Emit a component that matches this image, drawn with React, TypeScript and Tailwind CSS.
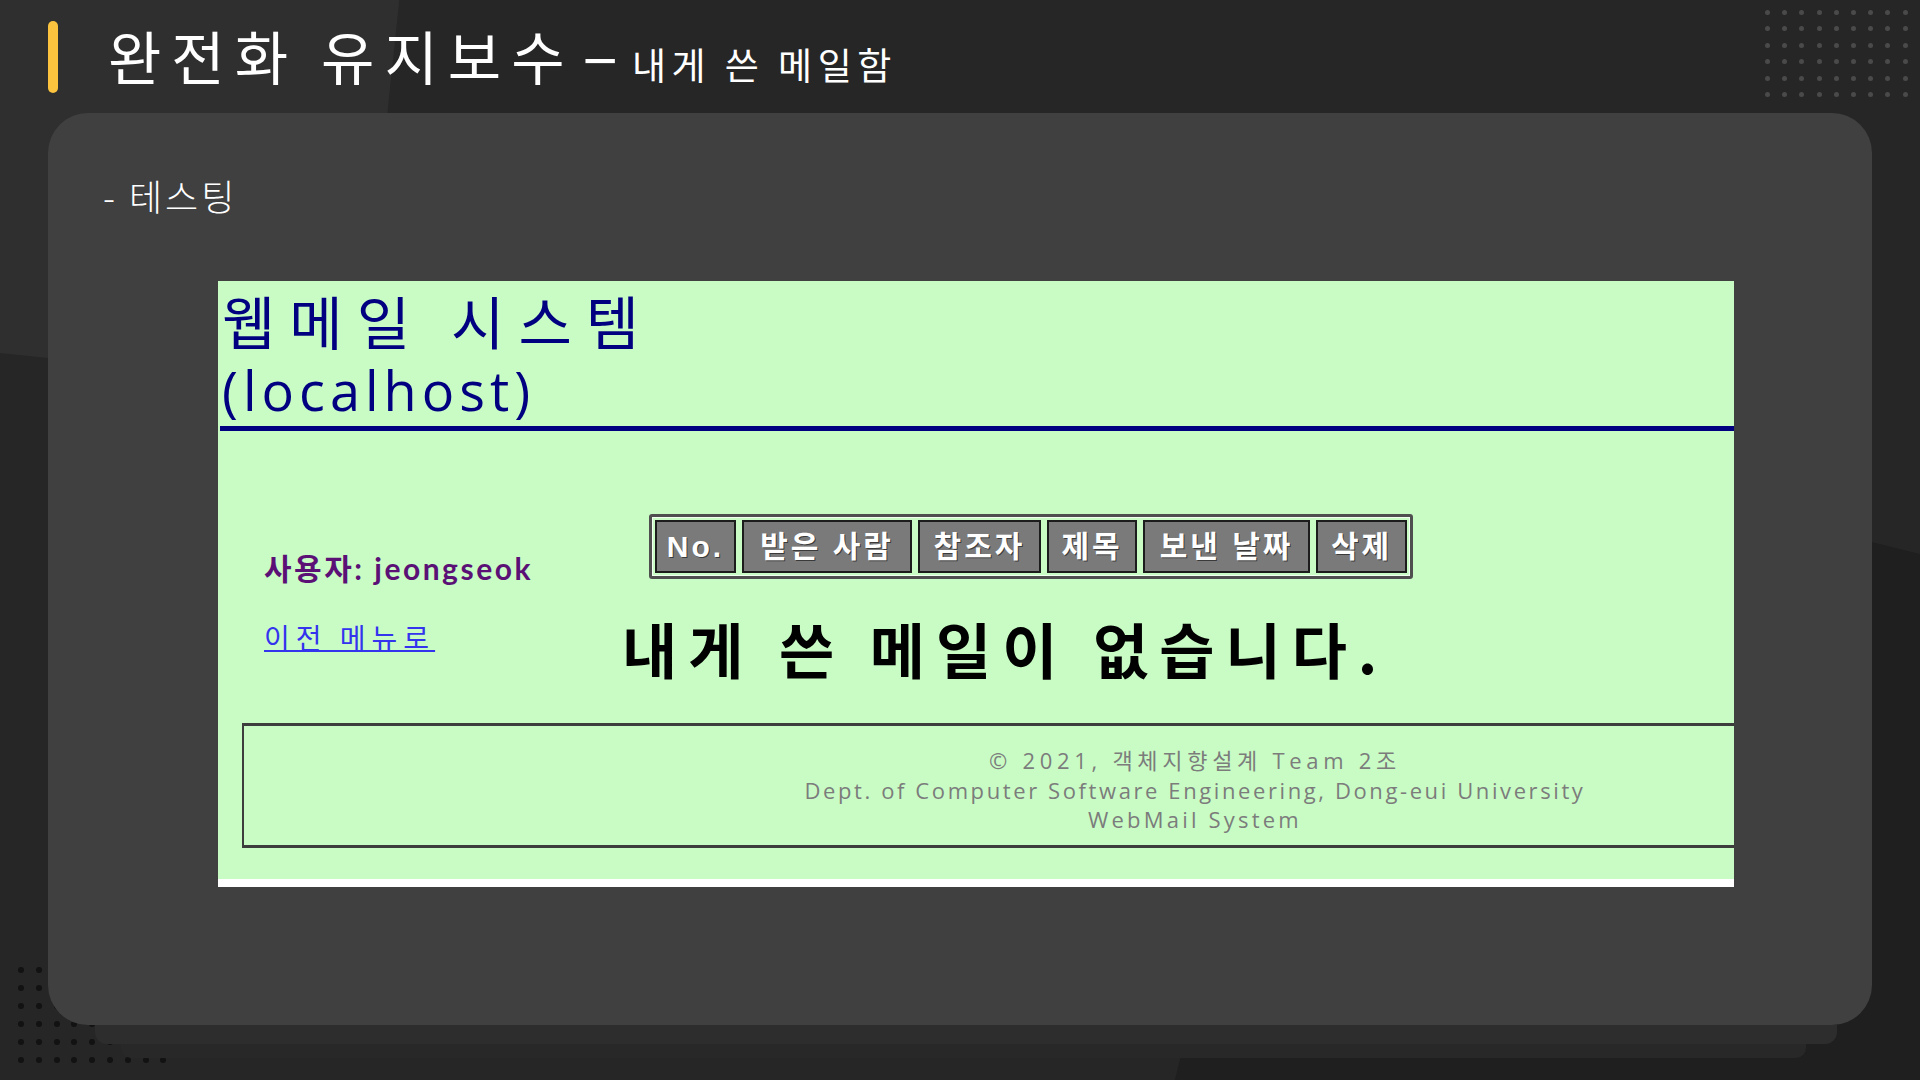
const kr = "font-['Noto_Sans_CJK_KR',sans-serif]";

const columns = [
  { label: 'No.', w: 'w-[81px]' },
  { label: '받은 사람', w: 'w-[170px]' },
  { label: '참조자', w: 'w-[123px]' },
  { label: '제목', w: 'w-[90px]' },
  { label: '보낸 날짜', w: 'w-[167px]' },
  { label: '삭제', w: 'w-[91px]' },
];

const Dots = ({ count, className, dot }: { count: number; className: string; dot: string }) => (
  <div className={className}>
    {Array.from({ length: count }).map((_, i) => (
      <span key={i} className={dot} />
    ))}
  </div>
);

// 캡처된 웹메일 화면 (내게 쓴 메일함)
const MailCapture = () => (
  <div className="ml-[115px] mt-[65px] h-[606px] w-[1516px] bg-white">
    <div className="h-[598px] bg-[#c9fcc5]">
      <div className="pl-[4px] pt-[7px] text-[#000080]">
        <h2 className={`mb-[9px] text-[58px] leading-[64px] tracking-[14px] ${kr}`}>웹메일 시스템</h2>
        <p className="text-[54px] leading-[58px] tracking-[5px] font-['Open_Sans','Noto_Sans_CJK_KR',sans-serif]">
          (localhost)
        </p>
      </div>
      <div className="ml-[2px] mt-[7px] h-[5px] bg-[#000080]" />

      <div className="flex">
        <div className="w-[404px] shrink-0 pl-[46px] pt-[120px]">
          <p className="text-[30px] font-bold leading-[34px] tracking-[2.5px] text-[#5b1076] font-['Lato','Noto_Sans_CJK_KR',sans-serif]">
            사용자: jeongseok
          </p>
          <a
            href="#"
            className={`mt-[35px] block text-[28px] leading-[34px] tracking-[6px] text-[#3434ee] underline decoration-[1.5px] ${kr}`}>
            이전 메뉴로
          </a>
        </div>
        <div className="pt-[83px]">
          <div className="ml-[27px] flex w-fit gap-[6px] rounded-[3px] border-[3px] border-[#4f4f4f] p-[3px] shadow-[inset_0_0_0_1px_#f0fff0]">
            {columns.map((c) => (
              <div
                key={c.label}
                className={`${c.w} flex h-[53px] items-center justify-center border-2 border-[#1c1c1c] bg-[#7a7a7a] text-[30px] font-bold tracking-[3px] text-white [text-shadow:1px_1px_0_#3a3a3a] font-['Liberation_Sans','Noto_Sans_CJK_KR',sans-serif]`}>
                {c.label}
              </div>
            ))}
          </div>
          <p className={`mt-[34px] text-[60px] font-bold leading-[70px] tracking-[11px] text-black ${kr}`}>
            내게 쓴 메일이 없습니다.
          </p>
        </div>
      </div>

      {/* 캡처가 오른쪽에서 잘려 있어 오른쪽 테두리는 없음 */}
      <footer className="ml-[24px] mt-[40px] h-[125px] border-y-[3px] border-l-2 border-[#3d3d3d] pl-[412px] pt-[20px] text-center text-[22px] leading-[29.5px] text-[#7c7c7c] font-['Open_Sans','Noto_Sans_CJK_KR',sans-serif]">
        <p className="tracking-[4.7px]">© 2021, 객체지향설계 Team 2조</p>
        <p className="tracking-[2.6px]">Dept. of Computer Software Engineering, Dong-eui University</p>
        <p className="tracking-[3.2px]">WebMail System</p>
      </footer>
    </div>
  </div>
);

const App = () => {
  return (
    <div className="relative h-[1080px] w-[1920px] overflow-hidden bg-[#262626]">
      {/* 배경 장식 */}
      <div className="absolute left-[-100px] top-[-100px] h-[440px] w-[507px] origin-top-left rotate-[6deg] rounded-br-[60px] bg-[#2f2f2f]" />
      <div className="absolute left-[1342px] top-[410px] h-[1400px] w-[1400px] origin-top-left rotate-[14deg] bg-[#1f1f1f]" />
      <Dots
        count={54}
        className="absolute left-[1765px] top-[10px] grid grid-cols-9 gap-x-[12.2px] gap-y-[11.4px]"
        dot="block h-[5px] w-[5px] rounded-full bg-[#4a4a4a]"
      />
      <Dots
        count={54}
        className="absolute left-[18px] top-[967px] grid grid-cols-9 gap-x-[11.8px] gap-y-[12px]"
        dot="block h-[6px] w-[6px] rounded-full bg-[#121212]"
      />

      <div className={`relative ${kr}`}>
        <header className="flex items-start pl-[48px]">
          <div className="mt-[21px] h-[72px] w-[10px] rounded-full bg-[#fcc43e]" />
          <div className="ml-[50px] mt-[18px] flex items-baseline text-white">
            <h1 className="text-[58px] leading-none tracking-[10px]">완전화 유지보수</h1>
            <span className="ml-[8px] text-[66px] leading-none">–</span>
            <span className="ml-[14px] text-[37px] leading-none tracking-[5.5px]">내게 쓴 메일함</span>
          </div>
        </header>

        <main className="ml-[48px] mt-[20px] h-[912px] w-[1824px] rounded-[40px] bg-[#404040] pl-[55px] pt-[62px]">
          <p className="text-[36px] font-light leading-[41px] tracking-[3px] text-white">- 테스팅</p>
          <MailCapture />
        </main>
        <div className="ml-[95px] h-[19px] w-[1742px] rounded-b-[12px] bg-[#2d2d2d]" />
        <div className="ml-[121px] h-[14px] w-[1685px] rounded-b-[10px] bg-[#282828]" />
      </div>
    </div>
  );
};

export default App;
